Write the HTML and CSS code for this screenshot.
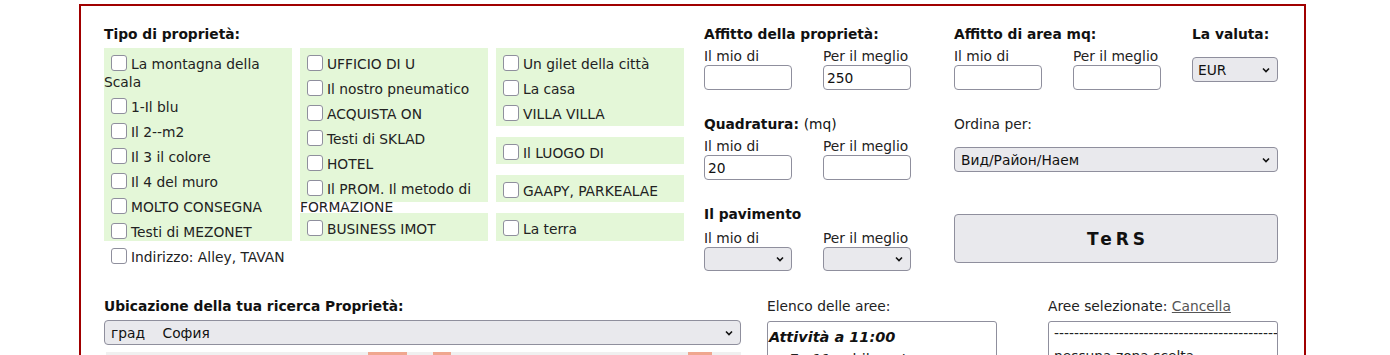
FILE: index.html
```html
<!DOCTYPE html>
<html lang="it">
<head>
    <meta charset="UTF-8">
    <meta name="viewport" content="width=device-width, initial-scale=1.0">
    <title>Ricerca proprietà</title>
    <link rel="stylesheet" href="styles.css">
</head>
<body>

<form class="search-box">
    <div class="top-row">
        <div class="types">
            <div class="title">Tipo di proprietà:</div>
            <div class="type-grid">
                <div class="type-cell span-4">
                    <label class="type"><input type="checkbox">La montagna della Scala</label>
                    <label class="type"><input type="checkbox">1-Il blu</label>
                    <label class="type"><input type="checkbox">Il 2--m2</label>
                    <label class="type"><input type="checkbox">Il 3 il colore</label>
                    <label class="type"><input type="checkbox">Il 4 del muro</label>
                    <label class="type"><input type="checkbox">MOLTO CONSEGNA</label>
                    <label class="type"><input type="checkbox">Testi di MEZONET</label>
                    <label class="type"><input type="checkbox">Indirizzo: Alley, TAVAN</label>
                </div>
                <div class="type-cell span-3">
                    <label class="type"><input type="checkbox">UFFICIO DI U</label>
                    <label class="type"><input type="checkbox">Il nostro pneumatico</label>
                    <label class="type"><input type="checkbox">ACQUISTA ON</label>
                    <label class="type"><input type="checkbox">Testi di SKLAD</label>
                    <label class="type"><input type="checkbox">HOTEL</label>
                    <label class="type"><input type="checkbox">Il PROM. Il metodo di FORMAZIONE</label>
                </div>
                <div class="type-cell">
                    <label class="type"><input type="checkbox">BUSINESS IMOT</label>
                </div>
                <div class="type-cell">
                    <label class="type"><input type="checkbox">Un gilet della città</label>
                    <label class="type"><input type="checkbox">La casa</label>
                    <label class="type"><input type="checkbox">VILLA VILLA</label>
                </div>
                <div class="type-cell">
                    <label class="type"><input type="checkbox">Il LUOGO DI</label>
                </div>
                <div class="type-cell">
                    <label class="type"><input type="checkbox">GAAPY, PARKEALAE</label>
                </div>
                <div class="type-cell">
                    <label class="type"><input type="checkbox">La terra</label>
                </div>
            </div>
        </div>

        <div class="ranges">
            <div class="range">
                <div class="title">Affitto della proprietà:</div>
                <div class="pair">
                    <div class="field"><label>Il mio di</label><input type="text" class="num"></div>
                    <div class="field"><label>Per il meglio</label><input type="text" class="num" value="250"></div>
                </div>
            </div>
            <div class="range">
                <div class="title">Quadratura: <span class="unit">(mq)</span></div>
                <div class="pair">
                    <div class="field"><label>Il mio di</label><input type="text" class="num" value="20"></div>
                    <div class="field"><label>Per il meglio</label><input type="text" class="num"></div>
                </div>
            </div>
            <div class="range floor">
                <div class="title">Il pavimento</div>
                <div class="pair">
                    <div class="field">
                        <label>Il mio di</label>
                        <span class="select-wrap small">
                            <select><option></option></select>
                            <svg class="chev" width="8" height="6" viewBox="0 0 8 6"><path d="M1 1.5 L4 4.5 L7 1.5" fill="none" stroke="#111" stroke-width="1.6"/></svg>
                        </span>
                    </div>
                    <div class="field">
                        <label>Per il meglio</label>
                        <span class="select-wrap small">
                            <select><option></option></select>
                            <svg class="chev" width="8" height="6" viewBox="0 0 8 6"><path d="M1 1.5 L4 4.5 L7 1.5" fill="none" stroke="#111" stroke-width="1.6"/></svg>
                        </span>
                    </div>
                </div>
            </div>
        </div>

        <div class="side">
            <div class="side-top">
                <div class="range">
                    <div class="title">Affitto di area mq:</div>
                    <div class="pair">
                        <div class="field"><label>Il mio di</label><input type="text" class="num"></div>
                        <div class="field"><label>Per il meglio</label><input type="text" class="num"></div>
                    </div>
                </div>
                <div class="currency">
                    <div class="title">La valuta:</div>
                    <span class="select-wrap">
                        <select><option>EUR</option><option>BGN</option></select>
                        <svg class="chev" width="8" height="6" viewBox="0 0 8 6"><path d="M1 1.5 L4 4.5 L7 1.5" fill="none" stroke="#111" stroke-width="1.6"/></svg>
                    </span>
                </div>
            </div>
            <div class="order">
                <label>Ordina per:</label>
                <span class="select-wrap">
                    <select><option>Вид/Район/Наем</option></select>
                    <svg class="chev" width="8" height="6" viewBox="0 0 8 6"><path d="M1 1.5 L4 4.5 L7 1.5" fill="none" stroke="#111" stroke-width="1.6"/></svg>
                </span>
            </div>
            <button type="button" class="submit">TeRS</button>
        </div>
    </div>

    <div class="bottom-row">
        <div class="location">
            <div class="title">Ubicazione della tua ricerca Proprietà:</div>
            <span class="select-wrap">
                <select><option>град&nbsp;&nbsp;&nbsp;&nbsp;София</option></select>
                <svg class="chev" width="8" height="6" viewBox="0 0 8 6"><path d="M1 1.5 L4 4.5 L7 1.5" fill="none" stroke="#111" stroke-width="1.6"/></svg>
            </span>
            <div class="district-bar">
                <span></span><span class="hot"></span><span></span><span class="hot"></span><span></span><span class="hot"></span><span></span>
            </div>
        </div>
        <div class="areas">
            <div class="list-label">Elenco delle aree:</div>
            <div class="list-box area-list">
                <div class="group-label">Attività a 11:00</div>
                <div class="area-item">7o 11o chilometro</div>
                <div class="area-item">Borovo</div>
                <div class="area-item">Boyana</div>
                <div class="area-item">Vitosha</div>
                <div class="area-item">Lozenets</div>
            </div>
        </div>
        <div class="selected">
            <div class="list-label">Aree selezionate: <a href="#" class="clear">Cancella</a></div>
            <div class="list-box chosen-list">
                <div>------------------------------------------------</div>
                <div>nessuna zona scelta</div>
            </div>
        </div>
    </div>
</form>

</body>
</html>
```

FILE: styles.css
```css
body { margin: 0; font-family: Tahoma, Verdana, "DejaVu Sans", sans-serif; font-size: 13.8px; color: #222; }

.search-box { width: 1227px; margin: 4px 0 0 79px; padding: 20px 26px 0 23px; box-sizing: border-box; border: 2px solid #a00000; border-bottom: 0; }
.title { font-weight: bold; line-height: 17px; color: #111; }
.title .unit { font-weight: normal; }

/* top part */
.top-row { display: flex; }
.types { width: 580px; }
.type-grid { display: grid; grid-template-columns: repeat(3, 188px); grid-template-rows: 78px 27px 27px 28px; grid-auto-flow: column; column-gap: 8px; row-gap: 11px; margin-top: 5px; }
.type-cell { background: #e4f7d8; padding-top: 4px; }
.span-4 { grid-row: span 4; }
.span-3 { grid-row: span 3; }
.type { display: block; line-height: 18px; padding: 3px 0 4px; }
.type input { appearance: none; box-sizing: border-box; width: 16px; height: 16px; margin: 0 4px 0 7px; vertical-align: top; border: 1px solid #8f8f9d; border-radius: 3px; background: #fff; }

.ranges { width: 207px; margin-left: 20px; }
.range + .range { margin-top: 26px; }
.pair { display: flex; gap: 31px; }
.field { width: 88px; }
.field label { display: block; line-height: 17px; margin-top: 5px; white-space: nowrap; }
.floor .field label { margin-top: 7px; }
.num { box-sizing: border-box; width: 88px; height: 25px; margin: 0; padding: 0 3px; border: 1px solid #8f8f9d; border-radius: 4px; font: inherit; color: #111; background: #fff; }

.select-wrap { position: relative; display: block; }
.select-wrap select { appearance: none; box-sizing: border-box; display: block; width: 100%; height: 25px; margin: 0; padding: 0 20px 0 6px; border: 1px solid #8f8f9d; border-radius: 4px; background: #e9e9ed; font: inherit; color: #111; }
.select-wrap.small select { height: 24px; }
.select-wrap .chev { position: absolute; right: 8px; top: 10px; pointer-events: none; }
.select-wrap.small .chev { top: 9px; }

.side { width: 324px; margin-left: 43px; }
.side-top { display: flex; gap: 31px; }
.currency { width: 86px; }
.currency .select-wrap { margin-top: 14px; }
.currency select { padding-left: 5px; }
.order { margin-top: 26px; }
.order label { display: block; line-height: 17px; }
.order .select-wrap { margin-top: 14px; }
.submit { display: block; box-sizing: border-box; width: 100%; height: 49px; margin-top: 42px; padding: 0 0 0 4px; border: 1px solid #8f8f9d; border-radius: 4px; background: #e9e9ed; color: #111; font-family: "DejaVu Sans", sans-serif; font-size: 17px; font-weight: bold; letter-spacing: 4px; cursor: pointer; }

/* bottom part */
.bottom-row { display: flex; margin-top: 27px; }
.location { width: 637px; }
.location .select-wrap { margin-top: 5px; }
.district-bar { display: grid; grid-template-columns: 262px 39px 26px 18px 237px 24px 1fr; height: 22px; margin: 7px 0 0 2px; background: #f0f0f0; }
.district-bar .hot { background: #f0a78f; }
.areas { width: 230px; margin-left: 26px; }
.selected { width: 230px; margin-left: 51px; }
.list-label { line-height: 17px; }
.clear { color: #555; }
.list-box { box-sizing: border-box; height: 150px; margin-top: 6px; border: 1px solid #8f8f9d; border-radius: 3px; overflow: hidden; white-space: nowrap; background: #fff; }
.area-list { padding: 4px 2px 0 1px; font-size: 14.5px; line-height: 22px; }
.group-label { font-weight: bold; font-style: italic; color: #111; }
.area-item { padding-left: 21px; }
.chosen-list { padding: 0 0 0 5px; line-height: 23px; }
```
